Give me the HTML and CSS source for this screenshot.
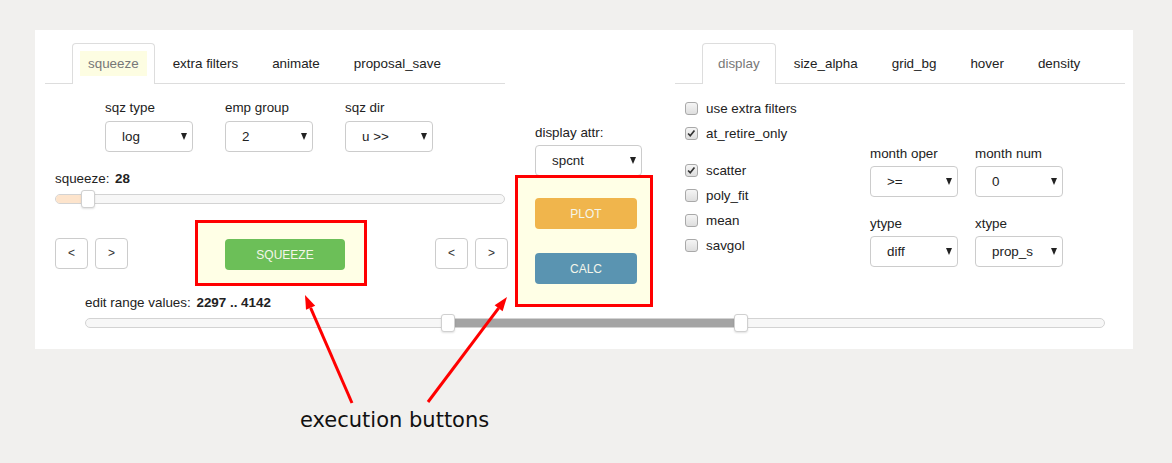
FILE: index.html
```html
<!DOCTYPE html>
<html lang="en">
<head>
<meta charset="UTF-8">
<title>squeeze / display controls</title>
<link rel="stylesheet" href="styles.css">
</head>
<body>
<div class="panel">
    <div class="col-left">
        <div class="tabs">
            <div class="tab active"><span class="hl">squeeze</span></div>
            <div class="tab"><span>extra filters</span></div>
            <div class="tab"><span>animate</span></div>
            <div class="tab"><span>proposal_save</span></div>
        </div>
        <div class="sel-row">
            <div class="field">
                <div class="lbl">sqz type</div>
                <div class="select"><span>log</span><i class="caret"></i></div>
            </div>
            <div class="field">
                <div class="lbl">emp group</div>
                <div class="select"><span>2</span><i class="caret"></i></div>
            </div>
            <div class="field">
                <div class="lbl">sqz dir</div>
                <div class="select"><span>u &gt;&gt;</span><i class="caret"></i></div>
            </div>
        </div>
        <div class="val-label">squeeze: <b>28</b></div>
        <div class="slider sqz-slider">
            <div class="fill peach" style="left:0;width:32px"></div>
            <div class="handle" style="left:25px"></div>
        </div>
        <div class="btn-row">
            <button class="step">&lt;</button>
            <button class="step">&gt;</button>
            <div class="exec-box left-box">
                <button class="exec green">SQUEEZE</button>
            </div>
            <button class="step">&lt;</button>
            <button class="step">&gt;</button>
        </div>
        <div class="range-label">edit range values: <b>2297 .. 4142</b></div>
        <div class="slider range-slider">
            <div class="fill grey" style="left:362px;width:293px"></div>
            <div class="handle" style="left:355px"></div>
            <div class="handle" style="left:648px"></div>
        </div>
    </div>

    <div class="col-mid">
        <div class="lbl">display attr:</div>
        <div class="select wide"><span>spcnt</span><i class="caret"></i></div>
        <div class="exec-box mid-box">
            <button class="exec orange">PLOT</button>
            <button class="exec blue">CALC</button>
        </div>
    </div>

    <div class="col-right">
        <div class="tabs">
            <div class="tab active"><span>display</span></div>
            <div class="tab"><span>size_alpha</span></div>
            <div class="tab"><span>grid_bg</span></div>
            <div class="tab"><span>hover</span></div>
            <div class="tab"><span>density</span></div>
        </div>
        <div class="right-body">
            <div class="checks">
                <label class="check"><i class="box"></i>use extra filters</label>
                <label class="check"><i class="box on"><svg viewBox="0 0 13 13" width="11" height="11"><path d="M2.5 6.5 L5 9.2 L10 3" fill="none" stroke="#333" stroke-width="2"/></svg></i>at_retire_only</label>
                <div class="check-gap"></div>
                <label class="check"><i class="box on"><svg viewBox="0 0 13 13" width="11" height="11"><path d="M2.5 6.5 L5 9.2 L10 3" fill="none" stroke="#333" stroke-width="2"/></svg></i>scatter</label>
                <label class="check"><i class="box"></i>poly_fit</label>
                <label class="check"><i class="box"></i>mean</label>
                <label class="check"><i class="box"></i>savgol</label>
            </div>
            <div class="opt-grid">
                <div class="field">
                    <div class="lbl">month oper</div>
                    <div class="select"><span>&gt;=</span><i class="caret"></i></div>
                </div>
                <div class="field">
                    <div class="lbl">month num</div>
                    <div class="select"><span>0</span><i class="caret"></i></div>
                </div>
                <div class="field">
                    <div class="lbl">ytype</div>
                    <div class="select"><span>diff</span><i class="caret"></i></div>
                </div>
                <div class="field">
                    <div class="lbl">xtype</div>
                    <div class="select"><span>prop_s</span><i class="caret"></i></div>
                </div>
            </div>
        </div>
    </div>
</div>

<div class="note">execution buttons</div>

<svg class="arrows" width="1172" height="463" viewBox="0 0 1172 463">
    <line x1="352" y1="403" x2="310.6" y2="307.8" stroke="#f00" stroke-width="3"/>
    <polygon points="305,295 315.2,305.8 306,309.8" fill="#f00"/>
    <line x1="428" y1="402" x2="498.6" y2="308.2" stroke="#f00" stroke-width="3"/>
    <polygon points="507,297 502.6,311.2 494.6,305.2" fill="#f00"/>
</svg>
</body>
</html>
```

FILE: styles.css
```css
body {
    margin: 0;
    background-color: #f1f0ee;
    font-family: "Liberation Sans", Arial, sans-serif;
    font-size: 13.4px;
    color: #222;
    position: relative;
    width: 1172px;
    height: 463px;
    overflow: hidden;
}
.panel {
    margin: 30px 0 0 35px;
    width: 1098px;
    box-sizing: border-box;
    padding: 13px 8px 21px 10px;
    background-color: #fff;
    display: flex;
    align-items: flex-start;
}
.col-left {
    width: 460px;
    flex: none;
}
.col-mid {
    width: 138px;
    margin-left: 10px;
    flex: none;
}
.col-right {
    width: 450px;
    margin-left: 22px;
    flex: none;
}

/* tabs */
.tabs {
    display: flex;
    height: 40px;
    padding-left: 27px;
    border-bottom: 1px solid #ddd;
}
.tab {
    border: 1px solid transparent;
    border-bottom: none;
    padding: 7px 7px 8px;
    margin-right: 2px;
    height: 40px;
    box-sizing: border-box;
    line-height: 15px;
}
.tab span {
    display: block;
    padding: 5px 8px;
}
.tab.active {
    border-color: #ddd;
    border-radius: 4px 4px 0 0;
    background-color: #fff;
    height: 41px;
    color: #777;
}
.tab .hl {
    background-color: #fdfde2;
}

/* labels and selects */
.lbl {
    line-height: 15px;
    margin-bottom: 6px;
}
.sel-row {
    display: flex;
    gap: 32px;
    margin-top: 16px;
    padding-left: 60px;
}
.select {
    width: 88px;
    height: 31px;
    box-sizing: border-box;
    border: 1px solid #ccc;
    border-radius: 4px;
    display: flex;
    align-items: center;
    justify-content: space-between;
    padding: 0 5px 0 16px;
}
.select.wide {
    width: 107px;
}
.caret {
    width: 0;
    height: 0;
    border-left: 3px solid transparent;
    border-right: 3px solid transparent;
    border-top: 7px solid #222;
}

/* sliders */
.val-label {
    margin-top: 19px;
    line-height: 15px;
    padding-left: 10px;
}
.val-label b, .range-label b {
    margin-left: 2px;
}
.slider {
    position: relative;
    height: 10px;
    box-sizing: border-box;
    border: 1px solid #d3d3d3;
    border-radius: 5px;
    background-color: #f7f7f7;
}
.sqz-slider {
    margin: 8px 0 0 10px;
    width: 450px;
}
.range-slider {
    margin: 8px 0 0 40px;
    width: 1020px;
}
.fill {
    position: absolute;
    top: 0;
    bottom: 0;
    border-radius: 4px;
}
.fill.peach {
    background-color: #fde4cc;
}
.fill.grey {
    background-color: #a4a4a4;
    border-radius: 0;
}
.handle {
    position: absolute;
    top: -5px;
    width: 14px;
    height: 18px;
    box-sizing: border-box;
    background-color: #fff;
    border: 1px solid #d0d0d0;
    border-radius: 3px;
    box-shadow: 0 1px 2px rgba(0, 0, 0, 0.12);
}
.range-label {
    margin-top: 9px;
    line-height: 15px;
    padding-left: 40px;
}

/* buttons */
.btn-row {
    display: flex;
    align-items: center;
    margin-top: 16px;
    padding-left: 10px;
}
.btn-row > * {
    flex: none;
}
.step {
    width: 33px;
    height: 31px;
    box-sizing: border-box;
    border: 1px solid #ccc;
    border-radius: 4px;
    background-color: #fff;
    font-family: "Liberation Sans", Arial, sans-serif;
    font-size: 12px;
    color: #333;
    padding: 0;
    margin-right: 7px;
}
.exec-box {
    border: 3px solid #f00;
    background-color: #ffffe6;
    box-sizing: border-box;
}
.left-box {
    width: 172px;
    height: 66px;
    padding: 16px 0 0 27px;
    margin: 0 68px 0 60px;
}
.mid-box {
    margin-top: -1px;
    height: 132px;
    padding: 20px 0 0 17px;
}
.exec {
    display: block;
    border: none;
    border-radius: 4px;
    height: 31px;
    font-family: "Liberation Sans", Arial, sans-serif;
    font-size: 12px;
    color: #f4f6ea;
    padding: 0;
}
.exec.green {
    width: 120px;
    background-color: #6cbf58;
}
.exec.orange {
    width: 102px;
    background-color: #f0b54c;
}
.exec.blue {
    width: 102px;
    margin-top: 24px;
    background-color: #5a94b1;
}
.col-mid .lbl {
    margin-top: 82px;
    margin-bottom: 5px;
    padding-left: 20px;
}
.col-mid .select {
    margin-left: 20px;
}

/* right side */
.right-body {
    display: flex;
    align-items: flex-start;
}
.checks {
    width: 195px;
    flex: none;
    padding-left: 10px;
    margin-top: 12px;
    box-sizing: border-box;
}
.check {
    display: flex;
    align-items: center;
    height: 25px;
}
.check-gap {
    height: 12px;
}
.box {
    width: 13px;
    height: 13px;
    box-sizing: border-box;
    border: 1px solid #a9a9a9;
    border-radius: 3px;
    background: linear-gradient(#f5f5f5, #dedede);
    margin-right: 8px;
    display: flex;
    align-items: center;
    justify-content: center;
}
.opt-grid {
    margin-top: 62px;
    display: grid;
    grid-template-columns: 88px 88px;
    column-gap: 17px;
    row-gap: 19px;
}
.opt-grid .lbl {
    margin-bottom: 5px;
}

/* annotation */
.note {
    margin: 58px 0 0 300px;
    font-family: "DejaVu Sans", sans-serif;
    font-size: 21px;
    line-height: 26px;
    color: #111;
}
.arrows {
    position: absolute;
    left: 0;
    top: 0;
    pointer-events: none;
}
```
